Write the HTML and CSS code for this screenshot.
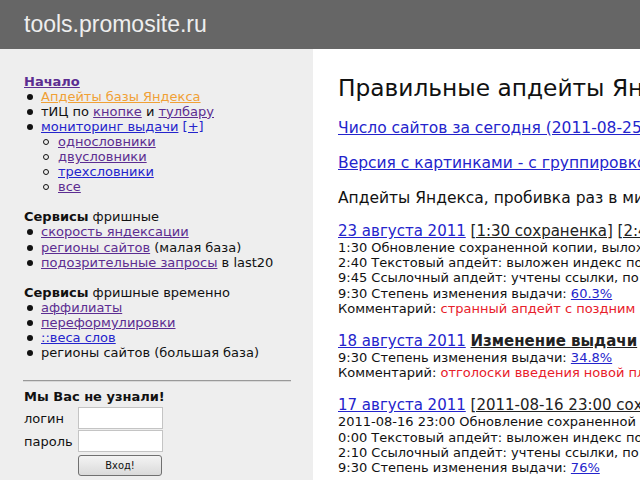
FILE: index.html
```html
<!DOCTYPE html>
<html lang="ru">
<head>
<meta charset="utf-8">
<title>tools.promosite.ru</title>
<link rel="stylesheet" href="styles.css">
</head>
<body>
<header class="top"><span class="site-title">tools.promosite.ru</span></header>
<div class="layout">
  <aside class="side">
    <nav class="group">
      <a class="home" href="#">Начало</a>
      <ul class="menu">
        <li><a class="current" href="#">Апдейты базы Яндекса</a></li>
        <li>тИЦ по <a class="v" href="#">кнопке</a> и <a class="v" href="#">тулбару</a></li>
        <li><a href="#">мониторинг выдачи</a> <a href="#">[+]</a>
          <ul class="sub">
            <li><a class="v" href="#">однословники</a></li>
            <li><a class="v" href="#">двусловники</a></li>
            <li><a href="#">трехсловники</a></li>
            <li><a class="v" href="#">все</a></li>
          </ul>
        </li>
      </ul>
    </nav>
    <div class="group">
      <div class="group-title"><b>Сервисы</b> фришные</div>
      <ul class="menu">
        <li><a class="v" href="#">скорость яндексации</a></li>
        <li><a class="v" href="#">регионы сайтов</a> (малая база)</li>
        <li><a class="v" href="#">подозрительные запросы</a> в last20</li>
      </ul>
    </div>
    <div class="group">
      <div class="group-title"><b>Сервисы</b> фришные временно</div>
      <ul class="menu">
        <li><a class="v" href="#">аффилиаты</a></li>
        <li><a class="v" href="#">переформулировки</a></li>
        <li><a href="#">::веса слов</a></li>
        <li>регионы сайтов (большая база)</li>
      </ul>
    </div>
    <hr class="sep">
    <form class="login" action="#">
      <div class="login-title">Мы Вас не узнали!</div>
      <div class="login-grid">
        <label class="login-label" for="login">логин</label>
        <input class="login-input" id="login" type="text">
        <label class="login-label" for="pass">пароль</label>
        <input class="login-input" id="pass" type="password">
        <span></span>
        <button class="login-btn" type="button">Вход!</button>
      </div>
    </form>
  </aside>
  <main class="content">
    <h1 class="page-title">Правильные апдейты Яндекса</h1>
    <p class="lead"><a href="#">Число сайтов за сегодня (2011-08-25)</a></p>
    <p class="lead"><a href="#">Версия с картинками - с группировкой по дням</a></p>
    <p class="lead intro">Апдейты Яндекса, пробивка раз в минуту</p>

    <section class="update">
      <div class="update-head"><a class="date" href="#">23 августа 2011</a> <a class="tag" href="#">[1:30 сохраненка]</a> <a class="tag" href="#">[2:40 текстовый]</a></div>
      <div class="line">1:30 Обновление сохраненной копии, выложена база</div>
      <div class="line">2:40 Текстовый апдейт: выложен индекс по базе</div>
      <div class="line">9:45 Ссылочный апдейт: учтены ссылки, по базе</div>
      <div class="line">9:30 Степень изменения выдачи: <a href="#">60.3%</a></div>
      <div class="line">Комментарий: <span class="note">странный апдейт с поздним выкладыванием</span></div>
    </section>

    <section class="update">
      <div class="update-head"><a class="date" href="#">18 августа 2011</a> <a class="tag strong" href="#">Изменение выдачи</a></div>
      <div class="line">9:30 Степень изменения выдачи: <a href="#">34.8%</a></div>
      <div class="line">Комментарий: <span class="note">отголоски введения новой платформы</span></div>
    </section>

    <section class="update">
      <div class="update-head"><a class="date" href="#">17 августа 2011</a> <a class="tag" href="#">[2011-08-16 23:00 сохраненка]</a></div>
      <div class="line">2011-08-16 23:00 Обновление сохраненной копии</div>
      <div class="line">0:00 Текстовый апдейт: выложен индекс по базе</div>
      <div class="line">2:10 Ссылочный апдейт: учтены ссылки, по базе</div>
      <div class="line">9:30 Степень изменения выдачи: <a href="#">76%</a></div>
    </section>
  </main>
</div>
</body>
</html>
```

FILE: styles.css
```css
html, body {
  margin: 0;
  padding: 0;
  height: 100%;
  overflow: hidden;
}
body {
  font-family: "DejaVu Sans", Verdana, sans-serif;
  font-size: 13px;
  color: #111;
  background: #fff;
}
a {
  color: #2424cc;
  text-decoration: underline;
}
a.v {
  color: #5c2d91;
}

.top {
  height: 49px;
  background: #666;
  display: flex;
  align-items: center;
  padding-left: 24px;
}
.site-title {
  font-family: "Liberation Sans", Arial, sans-serif;
  font-size: 23px;
  color: #eee;
}

.layout {
  display: flex;
  height: calc(100% - 49px);
}

.side {
  width: 313px;
  flex: none;
  box-sizing: border-box;
  background: #eee;
  padding: 24.5px 22px 0 24px;
  line-height: 15.1px;
}
.group {
  margin-bottom: 15.1px;
}
.home {
  font-weight: bold;
  color: #5c2d91;
}
.current {
  color: #f0a035;
}
.group-title b {
  font-weight: bold;
}
.menu, .sub {
  list-style: none;
  margin: 0;
  padding: 0;
}
.menu > li {
  padding-left: 17px;
}
.menu > li::before {
  content: "";
  display: inline-block;
  width: 6px;
  height: 6px;
  border-radius: 50%;
  background: #111;
  margin-left: -14.5px;
  margin-right: 8.5px;
  vertical-align: 1px;
}
.sub > li {
  padding-left: 17px;
}
.sub > li::before {
  content: "";
  display: inline-block;
  box-sizing: border-box;
  width: 6px;
  height: 6px;
  border-radius: 50%;
  border: 1px solid #111;
  margin-left: -15.5px;
  margin-right: 9.5px;
  vertical-align: 1px;
}
.sep {
  border: 0;
  border-top: 1px solid #999;
  border-bottom: 1px solid #d8d8d8;
  margin: 20px 0 7px -1px;
}
.login-title {
  font-weight: bold;
  line-height: 15px;
}
.login-grid {
  display: grid;
  grid-template-columns: 54px 85px;
  row-gap: 1px;
  margin-top: 3px;
  align-items: center;
}
.login-label {
  line-height: 15px;
}
.login-input {
  box-sizing: border-box;
  width: 85px;
  height: 22px;
  margin: 0;
  border: 1px solid #c4c4c4;
  background: #fff;
  padding: 0 2px;
}
.login-btn {
  box-sizing: border-box;
  width: 84px;
  height: 21px;
  margin-top: 2px;
  border: 1px solid #707070;
  border-radius: 3px;
  background: linear-gradient(#f4f4f4, #dadada);
  font-family: "DejaVu Sans Condensed", "Liberation Sans", sans-serif;
  font-size: 11px;
  color: #111;
  padding: 0;
}

.content {
  flex: 1;
  min-width: 0;
  overflow: hidden;
  white-space: nowrap;
  padding: 25px 0 0 25px;
}
.page-title {
  font-size: 23.3px;
  font-weight: normal;
  line-height: 28px;
  margin: 0 0 17px;
  color: #111;
}
.lead {
  font-size: 15.5px;
  line-height: 18px;
  margin: 0 0 17px;
}
.lead.intro {
  margin-bottom: 15px;
}
.update {
  margin-bottom: 16px;
}
.update-head {
  font-size: 15px;
  line-height: 18px;
}
.tag {
  color: #222;
}
.tag.strong {
  font-weight: bold;
}
.line {
  line-height: 15.2px;
}
.note {
  color: #e8202a;
}
```
